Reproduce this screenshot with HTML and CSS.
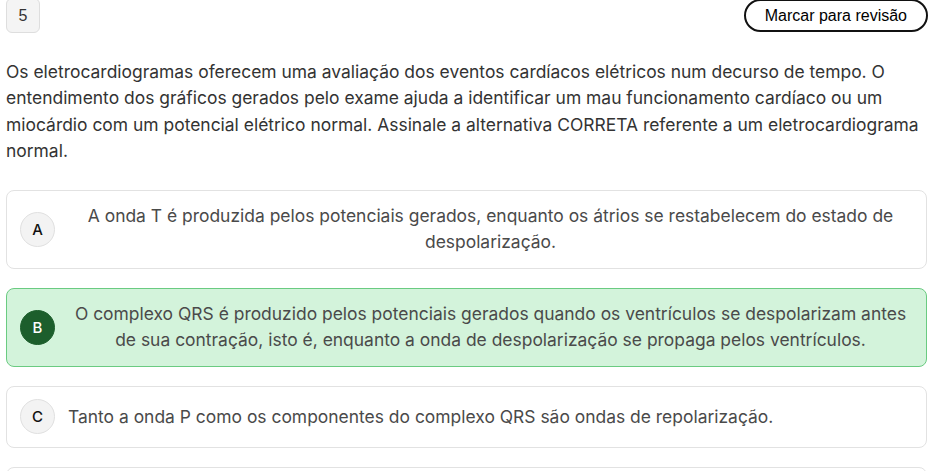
FILE: index.html
```html
<!DOCTYPE html>
<html lang="pt">
<head>
<meta charset="utf-8">
<title>Questão 5</title>
<link rel="stylesheet" href="styles.css">
</head>
<body>
<div class="page">
  <div class="header">
    <span class="qnum">5</span>
    <button class="review">Marcar para revisão</button>
  </div>
  <p class="question">Os eletrocardiogramas oferecem uma avaliação dos eventos cardíacos elétricos num decurso de tempo. O entendimento dos gráficos gerados pelo exame ajuda a identificar um mau funcionamento cardíaco ou um miocárdio com um potencial elétrico normal. Assinale a alternativa CORRETA referente a um eletrocardiograma normal.</p>
  <div class="options">
    <div class="option">
      <span class="letter">A</span>
      <span class="otext">A onda T é produzida pelos potenciais gerados, enquanto os átrios se restabelecem do estado de despolarização.</span>
    </div>
    <div class="option correct">
      <span class="letter">B</span>
      <span class="otext">O complexo QRS é produzido pelos potenciais gerados quando os ventrículos se despolarizam antes de sua contração, isto é, enquanto a onda de despolarização se propaga pelos ventrículos.</span>
    </div>
    <div class="option">
      <span class="letter">C</span>
      <span class="otext">Tanto a onda P como os componentes do complexo QRS são ondas de repolarização.</span>
    </div>
    <div class="option">
      <span class="letter">D</span>
      <span class="otext">A onda T é conhecida como onda de despolarização.</span>
    </div>
  </div>
</div>
</body>
</html>
```
FILE: styles.css
```css
html, body {
  margin: 0;
  padding: 0;
  background: #ffffff;
}
body {
  font-family: Inter, "Noto Sans", sans-serif;
  overflow: hidden;
}
.page {
  padding: 0 19px 0 6px;
  margin-top: -2px;
}
.header {
  display: flex;
  justify-content: space-between;
  align-items: flex-start;
}
.qnum {
  display: flex;
  align-items: center;
  justify-content: center;
  width: 34px;
  height: 35px;
  box-sizing: border-box;
  background: #f4f4f4;
  border: 1px solid #dedede;
  border-radius: 6px;
  font-family: "Liberation Sans", Arial, sans-serif;
  font-size: 16px;
  color: #333;
}
.review {
  margin-top: 1px;
  height: 33px;
  box-sizing: border-box;
  padding: 0 19px;
  background: #fff;
  border: 2px solid #111;
  border-radius: 999px;
  font-family: "Liberation Sans", Arial, sans-serif;
  font-size: 16px;
  color: #000;
  margin-right: -1px;
}
.question {
  margin: 26px 0 0 0;
  font-size: 17.45px;
  line-height: 26.4px;
  color: #333;
}
.options {
  display: flex;
  flex-direction: column;
  gap: 19px;
  margin-top: 25px;
}
.option {
  display: flex;
  align-items: center;
  gap: 13px;
  padding: 12.5px 13px;
  border: 1px solid #e2e2e2;
  border-radius: 8px;
  background: #fff;
}
.option.correct {
  background: #d3f3db;
  border-color: #6acb81;
}
.letter {
  flex: none;
  display: flex;
  align-items: center;
  justify-content: center;
  width: 35px;
  height: 35px;
  box-sizing: border-box;
  border-radius: 50%;
  background: #f3f3f3;
  border: 1px solid #e0e0e0;
  font-size: 15px;
  font-weight: 500;
  color: #111;
}
.correct .letter {
  background: #1c5e2c;
  border-color: #1c5e2c;
  color: #fff;
}
.otext {
  font-size: 17.45px;
  line-height: 26px;
  color: #4a4a4a;
  text-align: center;
}
```
